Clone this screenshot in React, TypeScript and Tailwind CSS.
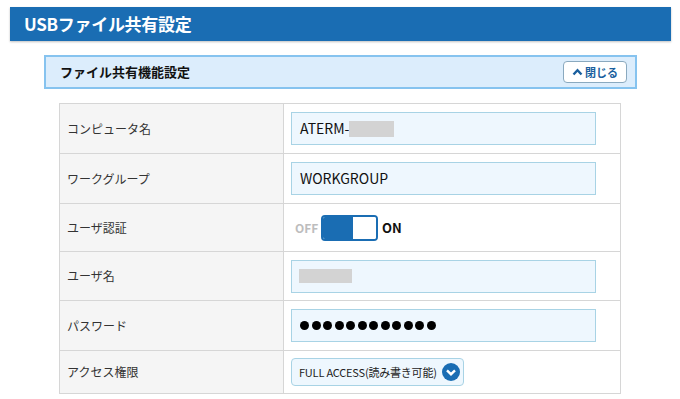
import { ReactNode } from "react";

const font = { fontFamily: '"Noto Sans CJK JP", "Noto Sans", sans-serif' };

function Row({ label, h, children, last }: { label: string; h: string; children: ReactNode; last?: boolean }) {
    return (
        <div className={`flex ${h} ${last ? "" : "border-b border-[#d6d6d6]"}`}>
            <div className="w-[224px] shrink-0 bg-[#f5f5f5] border-r border-[#d6d6d6] flex items-center pl-[7px] text-[12px] text-[#333]">
                {label}
            </div>
            <div className="flex-1 bg-white flex items-center pl-[7px]">{children}</div>
        </div>
    );
}

function TextBox({ children }: { children: ReactNode }) {
    return (
        <div className="w-[305px] h-[33px] bg-[#eef7fe] border border-[#a8d3e5] flex items-center pl-[8px] text-[14px] text-[#111]">
            {children}
        </div>
    );
}

export default function App() {
    return (
        <div className="w-[680px] h-[399px] bg-white overflow-hidden pt-[7px]" style={font}>
            {/* page title */}
            <div className="ml-[10px] w-[661px] h-[34px] bg-[#1a6db3] shadow-[0_1px_2px_rgba(0,0,0,0.25)] flex items-center pl-[14px]">
                <span className="text-white text-[17px] font-bold tracking-[-0.3px]">USBファイル共有設定</span>
            </div>

            {/* section header */}
            <div className="ml-[44px] mt-[14px] w-[593px] h-[34px] bg-[#dcedfc] border-2 border-[#86c3ef] flex items-center justify-between pl-[14px] pr-[8px]">
                <span className="text-[13px] font-bold text-[#111]">ファイル共有機能設定</span>
                <button className="w-[64px] h-[22px] bg-white border border-[#8aa9bf] rounded-[4px] flex items-center justify-center gap-[2px] text-[#1a5f9e] text-[11px] font-bold">
                    <svg width="11" height="8" viewBox="0 0 11 8">
                        <path d="M1.5 6.5 L5.5 2.2 L9.5 6.5" fill="none" stroke="#1a5f9e" strokeWidth="2.4" />
                    </svg>
                    閉じる
                </button>
            </div>

            {/* settings table */}
            <div className="ml-[59px] mt-[14px] w-[562px] border border-[#d6d6d6]">
                <Row label="コンピュータ名" h="h-[50px]">
                    <TextBox>
                        ATERM-
                        <span className="inline-block w-[45px] h-[16px] bg-[#d3d3d3]" />
                    </TextBox>
                </Row>
                <Row label="ワークグループ" h="h-[50px]">
                    <TextBox>WORKGROUP</TextBox>
                </Row>
                <Row label="ユーザ認証" h="h-[48px]">
                    <div className="flex items-center">
                        <span className="text-[12px] font-bold text-[#bdbdbd] w-[30px] pl-[4px]">OFF</span>
                        <div className="w-[57px] h-[26px] border-2 border-[#1a6db3] rounded-[4px] flex overflow-hidden">
                            <div className="w-[30px] bg-[#1a6db3]" />
                            <div className="flex-1 bg-white" />
                        </div>
                        <span className="text-[13px] font-bold text-[#111] ml-[4px]">ON</span>
                    </div>
                </Row>
                <Row label="ユーザ名" h="h-[49px]">
                    <TextBox>
                        <span className="inline-block w-[53px] h-[14px] bg-[#d3d3d3] -ml-[1px]" />
                    </TextBox>
                </Row>
                <Row label="パスワード" h="h-[50px]">
                    <TextBox>
                        <div className="flex gap-[2.5px]">
                            {Array.from({ length: 12 }).map((_, i) => (
                                <span key={i} className="w-[9px] h-[9px] rounded-full bg-black" />
                            ))}
                        </div>
                    </TextBox>
                </Row>
                <Row label="アクセス権限" h="h-[42px]" last>
                    <div className="h-[28px] w-[173px] bg-[#eef7fe] border border-[#a8d3e5] rounded-[4px] flex items-center pl-[7px] pr-[3px] justify-between">
                        <span className="text-[11px] text-[#222] tracking-[-0.2px] whitespace-nowrap">FULL ACCESS(読み書き可能)</span>
                        <svg width="18" height="18" viewBox="0 0 18 18" className="shrink-0">
                            <circle cx="9" cy="9" r="9" fill="#1a6db3" />
                            <path d="M5 7.3 L9 11.2 L13 7.3" fill="none" stroke="white" strokeWidth="2.4" />
                        </svg>
                    </div>
                </Row>
            </div>
        </div>
    );
}
